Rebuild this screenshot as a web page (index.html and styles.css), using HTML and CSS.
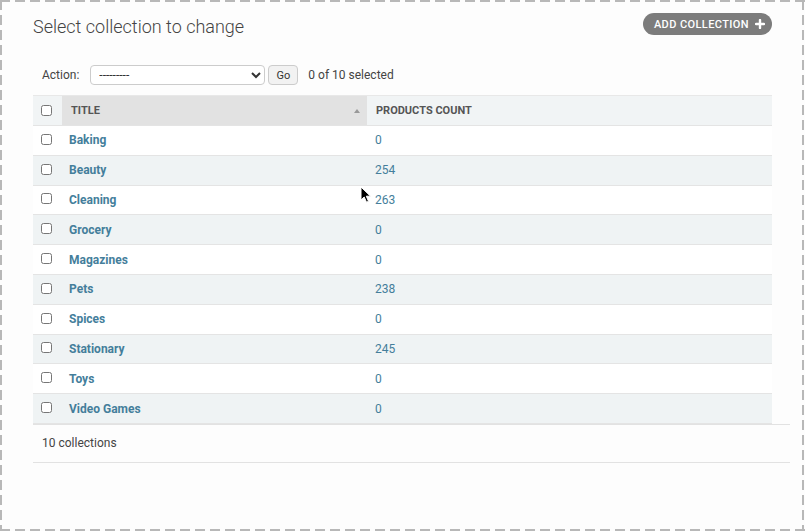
FILE: index.html
```html
<!DOCTYPE html>
<html>
<head>
<meta charset="utf-8">
<link rel="stylesheet" href="styles.css">
</head>
<body>
<div class="frame">
  <div class="content">
    <div class="top">
      <h1 class="title">Select collection to change</h1>
      <a class="addlink" href="#">ADD COLLECTION
        <svg class="plus" width="10" height="10" viewBox="0 0 10 10"><path d="M5 1v8M1 5h8" stroke="#fff" stroke-width="2.4" stroke-linecap="round"/></svg>
      </a>
    </div>
    <div class="actions">
      <label class="action-label">Action:</label>
      <select class="action-select"><option>---------</option></select>
      <button class="go">Go</button>
      <span class="counter">0 of 10 selected</span>
    </div>
    <table class="results">
      <thead>
        <tr>
          <th class="col-check"><input type="checkbox"></th>
          <th class="col-title sorted"><span>TITLE</span><span class="sort-arrow"></span></th>
          <th class="col-count">PRODUCTS COUNT</th>
        </tr>
      </thead>
      <tbody>
        <tr class="row1"><td class="col-check"><input type="checkbox"></td><th class="name"><a href="#">Baking</a></th><td class="num">0</td></tr>
        <tr class="row2"><td class="col-check"><input type="checkbox"></td><th class="name"><a href="#">Beauty</a></th><td class="num">254</td></tr>
        <tr class="row1"><td class="col-check"><input type="checkbox"></td><th class="name"><a href="#">Cleaning</a></th><td class="num">263</td></tr>
        <tr class="row2"><td class="col-check"><input type="checkbox"></td><th class="name"><a href="#">Grocery</a></th><td class="num">0</td></tr>
        <tr class="row1"><td class="col-check"><input type="checkbox"></td><th class="name"><a href="#">Magazines</a></th><td class="num">0</td></tr>
        <tr class="row2"><td class="col-check"><input type="checkbox"></td><th class="name"><a href="#">Pets</a></th><td class="num">238</td></tr>
        <tr class="row1"><td class="col-check"><input type="checkbox"></td><th class="name"><a href="#">Spices</a></th><td class="num">0</td></tr>
        <tr class="row2"><td class="col-check"><input type="checkbox"></td><th class="name"><a href="#">Stationary</a></th><td class="num">245</td></tr>
        <tr class="row1"><td class="col-check"><input type="checkbox"></td><th class="name"><a href="#">Toys</a></th><td class="num">0</td></tr>
        <tr class="row2"><td class="col-check"><input type="checkbox"></td><th class="name"><a href="#">Video Games</a></th><td class="num">0</td></tr>
      </tbody>
    </table>
    <p class="paginator">10 collections</p>
  </div>
  <svg class="cursor" width="12" height="18" viewBox="0 0 12 18"><path d="M1 1v13l3.2-3 2.3 5.2 2-0.9-2.2-5.1H10.5z" fill="#000" stroke="#fff" stroke-width="1"/></svg>
</div>
</body>
</html>
```
FILE: styles.css
```css
html, body {
  margin: 0;
  padding: 0;
  background: #fff;
}
body {
  font-family: Roboto, "Liberation Sans", sans-serif;
  color: #333;
}
.frame {
  position: relative;
  width: 805px;
  height: 531px;
  box-sizing: border-box;
  background-color: #fdfdfd;
  background-image:
    repeating-linear-gradient(to right, #b8b8b8 0 10px, transparent 10px 15px),
    repeating-linear-gradient(to right, #b8b8b8 0 10px, transparent 10px 15px),
    repeating-linear-gradient(to bottom, #b8b8b8 0 10px, transparent 10px 15px),
    repeating-linear-gradient(to bottom, #b8b8b8 0 10px, transparent 10px 15px);
  background-size: 100% 2px, 100% 2px, 2px 100%, 2px 100%;
  background-position: 0 0, 0 529px, 0 0, 802px 0;
  background-repeat: no-repeat;
  padding: 0 15px 0 33px;
}
.content {
  display: flex;
  flex-direction: column;
}
.top {
  display: flex;
  justify-content: space-between;
  align-items: flex-start;
  margin-right: 18px;
  height: 65px;
}
.title {
  margin: 15px 0 0 0;
  font-size: 18px;
  font-weight: 300;
  color: #444;
  line-height: 24px;
}
.addlink {
  margin-top: 13px;
  display: flex;
  align-items: center;
  gap: 6px;
  height: 22px;
  box-sizing: border-box;
  padding: 0 7px 0 11px;
  border-radius: 12px;
  background: #7c7c7c;
  color: #fff;
  text-decoration: none;
  font-size: 11px;
  font-weight: 500;
  letter-spacing: 0.4px;
}
.plus { display: block; }
.actions {
  display: flex;
  align-items: center;
  height: 20px;
  padding-left: 9px;
  font-size: 12px;
  color: #444;
}
.action-label { margin-right: 11px; }
.action-select {
  width: 175px;
  height: 20px;
  border: 1px solid #ccc;
  border-radius: 4px;
  background: #fff;
  font-family: Roboto, "Liberation Sans", sans-serif;
  font-size: 12px;
  color: #333;
  padding: 0 4px;
}
.go {
  margin-left: 3px;
  width: 30px;
  height: 20px;
  padding: 0;
  border: 1px solid #ccc;
  border-radius: 4px;
  background: #f2f2f2;
  font-family: Roboto, "Liberation Sans", sans-serif;
  font-size: 11px;
  color: #333;
}
.counter { margin-left: 10px; color: #444; }
.results {
  margin-top: 10px;
  margin-right: 18px;
  border-collapse: collapse;
  width: calc(100% - 18px);
  font-size: 12px;
}
.results thead th {
  height: 29px;
  padding: 0;
  background: #f1f4f5;
  border-top: 1px solid #e8e8e8;
  border-bottom: 1px solid #e4e4e4;
  font-size: 11px;
  font-weight: 700;
  color: #555;
  text-align: left;
  vertical-align: middle;
}
.results thead th.sorted {
  background: #e2e2e2;
}
.col-check {
  width: 29px;
  padding: 0 0 0 8px !important;
  box-sizing: border-box;
}
.col-title {
  width: 305px;
  position: relative;
}
.col-title span:first-child { padding-left: 9px; }
.sort-arrow {
  position: absolute;
  right: 7px;
  top: 13px;
  width: 0;
  height: 0;
  border-left: 3.5px solid transparent;
  border-right: 3.5px solid transparent;
  border-bottom: 4px solid #999;
}
.col-count { padding-left: 9px !important; }
input[type=checkbox] {
  margin: 0;
  width: 11px;
  height: 11px;
  display: block;
}
.results tbody tr { height: 29.8px; }
.results tbody td, .results tbody th {
  padding: 0;
  border-bottom: 1px solid #e4e4e4;
  vertical-align: middle;
  text-align: left;
}
.results tbody td.col-check input { margin-top: -2px; }
.row1 { background: #fff; }
.row2 { background: #eff3f4; }
.name { padding-left: 7px !important; font-weight: 700; }
.name a, .num { color: #447e9b; text-decoration: none; }
.num { padding-left: 8px !important; }
.paginator {
  margin: 0;
  height: 37px;
  line-height: 37px;
  padding-left: 9px;
  border-top: 1px solid #e2e2e2;
  border-bottom: 1px solid #e2e2e2;
  font-size: 12px;
  color: #444;
}
.cursor {
  position: absolute;
  left: 360px;
  top: 186px;
}
```
